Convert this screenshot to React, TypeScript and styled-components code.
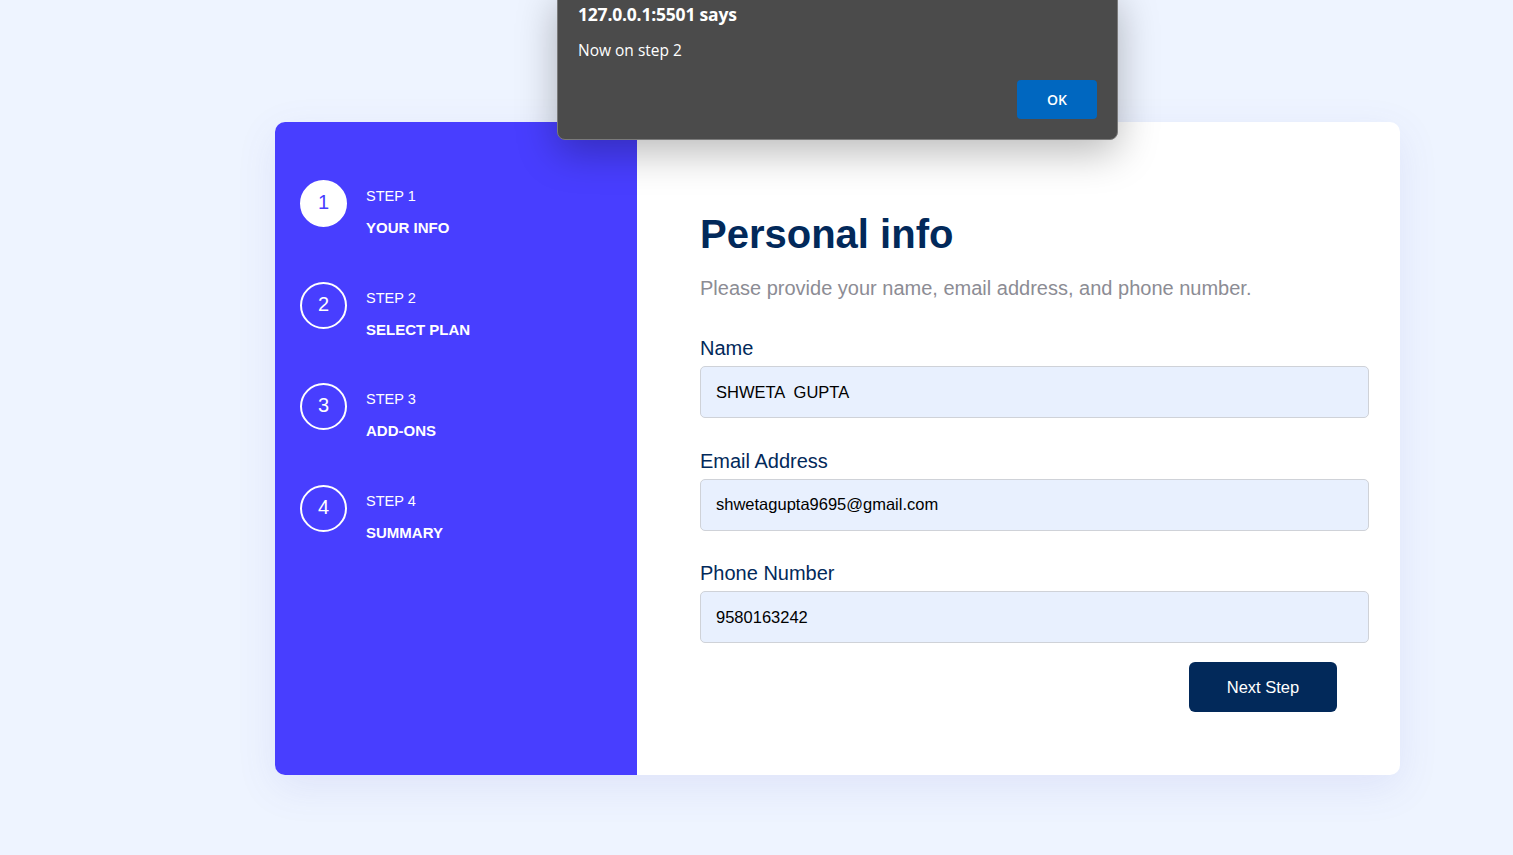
import React from "react";
import styled, { createGlobalStyle } from "styled-components";

const Global = createGlobalStyle`
  html, body { margin: 0; padding: 0; }
  body {
    background: #eef4ff;
    font-family: "Liberation Sans", Arial, sans-serif;
    width: 1513px;
    height: 855px;
    overflow: hidden;
  }
`;

const Page = styled.div`
  position: relative;
  width: 1513px;
  height: 855px;
  padding: 122px 0 0 275px;
  box-sizing: border-box;
`;

const Card = styled.div`
  display: flex;
  width: 1125px;
  height: 653px;
  background: #ffffff;
  border-radius: 10px;
  box-shadow: 0 12px 40px rgba(90, 90, 200, 0.10);
  overflow: hidden;
`;

const Sidebar = styled.aside`
  width: 362px;
  flex: none;
  background: #483eff;
  padding: 58px 0 0 25px;
  box-sizing: border-box;
  display: flex;
  flex-direction: column;
  gap: 44.7px;
`;

const StepRow = styled.div`
  display: flex;
  align-items: flex-start;
  gap: 19px;
`;

const Circle = styled.div<{ $active?: boolean }>`
  width: 47px;
  height: 47px;
  box-sizing: border-box;
  border-radius: 50%;
  border: 2px solid #ffffff;
  background: ${(p) => (p.$active ? "#ffffff" : "transparent")};
  color: ${(p) => (p.$active ? "#483eff" : "#ffffff")};
  display: flex;
  align-items: center;
  justify-content: center;
  padding-bottom: 3px;
  font-size: 20px;
  line-height: 1;
  flex: none;
`;

const StepText = styled.div`
  display: flex;
  flex-direction: column;
  gap: 14px;
  padding-top: 7px;
  color: #ffffff;
`;

const StepNum = styled.span`
  font-size: 14.5px;
  line-height: 18px;
`;

const StepLabel = styled.span`
  font-size: 15px;
  line-height: 18px;
  font-weight: 700;
`;

const Main = styled.main`
  flex: 1;
  padding: 89px 31px 0 63px;
  box-sizing: border-box;
  display: flex;
  flex-direction: column;
`;

const Title = styled.h1`
  margin: 0;
  font-size: 40px;
  line-height: 46px;
  font-weight: 700;
  color: #02295a;
`;

const Subtitle = styled.p`
  margin: 20px 0 0;
  font-size: 20px;
  line-height: 23px;
  color: #8c8c94;
`;

const Form = styled.form`
  margin-top: 37px;
  display: flex;
  flex-direction: column;
  gap: 31.5px;
`;

const Field = styled.div`
  display: flex;
  flex-direction: column;
  gap: 6px;
`;

const Label = styled.label`
  font-size: 20px;
  line-height: 23px;
  color: #02295a;
`;

const Input = styled.input`
  height: 52px;
  box-sizing: border-box;
  width: 100%;
  border: 1px solid #cfd2d8;
  border-radius: 5px;
  background: #e8f0fe;
  padding: 0 15px;
  font-family: "Liberation Sans", Arial, sans-serif;
  font-size: 16.5px;
  color: #000000;
  outline: none;
`;

const Actions = styled.div`
  display: flex;
  justify-content: flex-end;
  padding-right: 32px;
  margin-top: -12.5px;
`;

const NextButton = styled.button`
  width: 148px;
  height: 50px;
  border: none;
  border-radius: 6px;
  background: #02295a;
  color: #ffffff;
  font-family: "Liberation Sans", Arial, sans-serif;
  font-size: 16.5px;
  cursor: pointer;
`;

const Dialog = styled.div`
  position: absolute;
  top: -10px;
  left: 557px;
  width: 561px;
  height: 150px;
  box-sizing: border-box;
  background: #4b4b4b;
  border: 1px solid #7a7a7a;
  border-radius: 8px;
  box-shadow: 0 12px 40px rgba(0, 0, 0, 0.28);
  padding: 11px 20px 0 20px;
  display: flex;
  flex-direction: column;
  font-family: "Open Sans", "Noto Sans", sans-serif;
  color: #ffffff;
`;

const DialogTitle = styled.div`
  font-size: 17.5px;
  line-height: 24px;
  font-weight: 700;
  letter-spacing: -0.2px;
`;

const DialogMessage = styled.div`
  margin-top: 14px;
  font-size: 15.5px;
  line-height: 20px;
`;

const DialogActions = styled.div`
  display: flex;
  justify-content: flex-end;
  margin-top: 20px;
`;

const OkButton = styled.button`
  width: 80px;
  height: 39px;
  border: none;
  border-radius: 4px;
  background: #0067c0;
  color: #ffffff;
  font-family: "Open Sans", "Noto Sans", sans-serif;
  font-size: 14px;
  font-weight: 600;
`;

const steps = [
  { n: 1, label: "YOUR INFO" },
  { n: 2, label: "SELECT PLAN" },
  { n: 3, label: "ADD-ONS" },
  { n: 4, label: "SUMMARY" },
];

export default function App() {
  return (
    <>
      <Global />
      <Page>
        <Card>
          <Sidebar>
            {steps.map((s) => (
              <StepRow key={s.n}>
                <Circle $active={s.n === 1}>{s.n}</Circle>
                <StepText>
                  <StepNum>STEP {s.n}</StepNum>
                  <StepLabel>{s.label}</StepLabel>
                </StepText>
              </StepRow>
            ))}
          </Sidebar>
          <Main>
            <Title>Personal info</Title>
            <Subtitle>Please provide your name, email address, and phone number.</Subtitle>
            <Form onSubmit={(e) => e.preventDefault()}>
              <Field>
                <Label>Name</Label>
                <Input defaultValue="SHWETA  GUPTA" />
              </Field>
              <Field>
                <Label>Email Address</Label>
                <Input defaultValue="shwetagupta9695@gmail.com" />
              </Field>
              <Field>
                <Label>Phone Number</Label>
                <Input defaultValue="9580163242" />
              </Field>
              <Actions>
                <NextButton type="button">Next Step</NextButton>
              </Actions>
            </Form>
          </Main>
        </Card>
        <Dialog>
          <DialogTitle>127.0.0.1:5501 says</DialogTitle>
          <DialogMessage>Now on step 2</DialogMessage>
          <DialogActions>
            <OkButton type="button">OK</OkButton>
          </DialogActions>
        </Dialog>
      </Page>
    </>
  );
}
